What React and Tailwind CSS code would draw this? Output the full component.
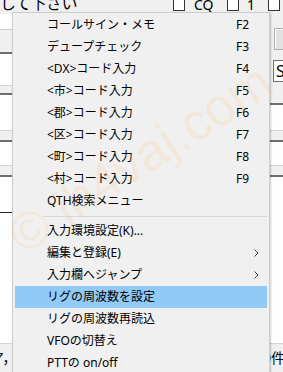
import React from "react";

const items = [
  { label: "コールサイン・メモ", key: "F2" },
  { label: "デュープチェック", key: "F3" },
  { label: "<DX>コード入力", key: "F4" },
  { label: "<市>コード入力", key: "F5" },
  { label: "<郡>コード入力", key: "F6" },
  { label: "<区>コード入力", key: "F7" },
  { label: "<町>コード入力", key: "F8" },
  { label: "<村>コード入力", key: "F9" },
  { label: "QTH検索メニュー" },
  { sep: true },
  { label: "入力環境設定(K)..." },
  { label: "編集と登録(E)", sub: true },
  { label: "入力欄へジャンプ", sub: true },
  { label: "リグの周波数を設定", active: true },
  { label: "リグの周波数再読込" },
  { label: "VFOの切替え" },
  { label: "PTTの on/off" },
];

function Chevron() {
  return (
    <svg width="5" height="8" viewBox="0 0 5 8" className="ml-[18px]">
      <polyline points="0.5,0.5 4,4 0.5,7.5" fill="none" stroke="#404040" strokeWidth="1" />
    </svg>
  );
}

function Menu() {
  return (
    <div className="absolute left-[12px] top-[12px] w-[258px] h-[380px] border border-[#cccccc] bg-[#f0f0f0] px-[2px] pt-[1px] shadow-[1px_1px_2px_rgba(0,0,0,0.2)]">
      {items.map((it, idx) =>
        it.sep ? (
          <div key={idx} className="h-[8px] flex items-center">
            <div className="ml-[28px] flex-1 h-px bg-[#d7d7d7]" />
          </div>
        ) : (
          <div
            key={idx}
            className={
              "h-[22px] flex items-center pl-[32px] text-[12px] text-black leading-none " +
              (it.active ? "bg-[#91c9f7]" : "")
            }
          >
            <span className="flex-1 whitespace-nowrap">{it.label}</span>
            <span className="w-[31px] flex items-center">
              {it.key && <span>{it.key}</span>}
              {it.sub && <Chevron />}
            </span>
          </div>
        )
      )}
    </div>
  );
}

function Box() {
  return <div className="w-[12px] h-[12px] mt-[-1px] border border-[#333333] bg-white shrink-0" />;
}

export default function App() {
  return (
    <div
      className="relative w-[283px] h-[372px] overflow-hidden bg-[#f0f0f0] text-black"
      style={{ fontFamily: '"Noto Sans", "Noto Sans CJK JP", sans-serif' }}
    >
      {/* header row */}
      <div className="h-[14px] flex items-start text-[14px] leading-none">
        <div className="w-[173px] shrink-0 mt-[-5px] text-[16px] tracking-[-0.5px] whitespace-nowrap">して下さい</div>
        <Box />
        <div className="w-[42px] pl-[9px] mt-[-2px]">CQ</div>
        <Box />
        <div className="w-[29px] pl-[8px] mt-[-2px]">1</div>
        <Box />
      </div>

      {/* form body under the menu */}
      <div className="flex justify-between">
        <div className="w-[141px] flex flex-col">
          <div className="h-[16px] bg-white border-b border-[#c8c8c8]" />
          <div className="h-[22px]" />
          <div className="h-[34px] bg-white border-t-2 border-t-[#6d6d6d] border-b border-b-[#d4d4d4]" />
          <div className="h-[7px]" />
          <div className="h-[38px] bg-white border-t-2 border-t-[#6d6d6d] border-b border-b-[#d4d4d4]" />
          <div className="h-[9px]" />
          <div className="h-[26px] bg-white border-t-2 border-t-[#6d6d6d] border-b border-b-[#d4d4d4]" />
          <div className="h-[9px]" />
          <div className="h-[169px] bg-white border-t-2 border-t-[#6d6d6d] border-b border-b-[#d4d4d4] pt-[35px]">
            <div className="h-px bg-[#202020]" />
          </div>
          <div className="h-[29px] text-[14px] pt-[3px] ml-[-10px] whitespace-nowrap">ア，</div>
        </div>

        <div className="w-[142px] flex flex-col items-end">
          <div className="h-[14px]" />
          <div className="w-[9px] h-[22px] border border-[#adadad] border-r-0 bg-[#e1e1e1]">
            <div className="h-full border-l border-t border-white" />
          </div>
          <div className="h-[10px]" />
          <div className="w-[10px] h-[22px] border border-[#6d6d6d] border-r-0 bg-white text-[16px] leading-[20px] pl-[2px] overflow-hidden">
            S
          </div>
          <div className="h-[21px]" />
          <div className="w-full h-[28px] bg-white border-t-2 border-t-[#6d6d6d] border-b border-b-[#d4d4d4]" />
          <div className="w-full h-[9px]" />
          <div className="w-full h-[26px] bg-white border-t-2 border-t-[#6d6d6d] border-b border-b-[#d4d4d4]" />
          <div className="w-full h-[9px]" />
          <div className="w-full h-[169px] bg-white border-t-2 border-t-[#6d6d6d] border-b border-b-[#d4d4d4]" />
          <div className="w-full h-[29px] text-[14px] pt-[3px] pl-[122px] whitespace-nowrap">0件</div>
        </div>
      </div>

      <Menu />

      {/* watermark */}
      <div
        className="pointer-events-none absolute left-[140px] top-[158px] -translate-x-1/2 -translate-y-1/2 rotate-[-33deg] whitespace-nowrap text-[52px] leading-none text-[rgba(255,160,40,0.1)]"
        style={{ fontFamily: '"Liberation Sans", sans-serif' }}
      >
        © jh4vaj.com
      </div>
    </div>
  );
}
